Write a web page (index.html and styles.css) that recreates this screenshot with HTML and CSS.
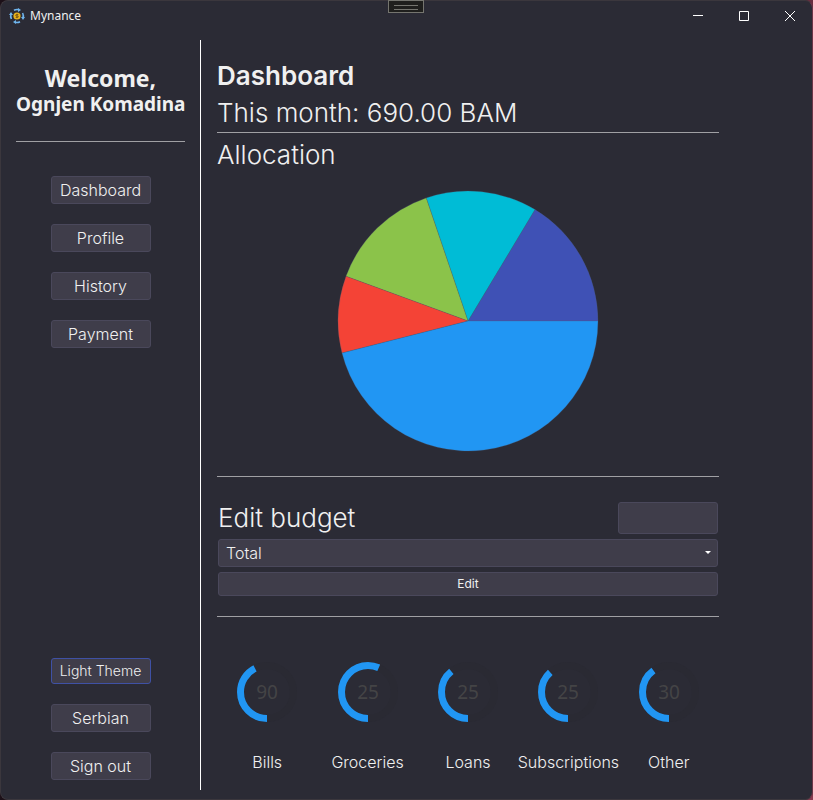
FILE: index.html
```html
<!DOCTYPE html>
<html lang="en">
<head>
<meta charset="utf-8">
<meta name="viewport" content="width=device-width, initial-scale=1">
<title>Mynance</title>
<link rel="stylesheet" href="styles.css">
</head>
<body>
<div class="window">
  <header class="titlebar">
    <svg class="app-icon" viewBox="0 0 16 16" aria-hidden="true">
      <g fill="none" stroke="#6fb5ee" stroke-width="1.6">
        <path d="M5 2.2A6.6 6.6 0 0 1 9.5 1.6"/>
        <path d="M13.6 5A6.6 6.6 0 0 1 14 10"/>
        <path d="M11 13.8A6.6 6.6 0 0 1 6.5 14.4"/>
        <path d="M2.4 11A6.6 6.6 0 0 1 2 6"/>
      </g>
      <path fill="#6fb5ee" d="M9 0l3 2-3 2zM16 9l-2 3-2-3zM7 16l-3-2 3-2zM0 7l2-3 2 3z"/>
      <circle cx="8" cy="8" r="3.6" fill="#e9b21d"/>
      <path d="M9.3 6.6H7.4c-1 0-1 1.4 0 1.4h1.2c1 0 1 1.4 0 1.4H6.7M8 5.8v4.4" fill="none" stroke="#6b4d12" stroke-width=".8"/>
    </svg>
    <span class="app-name">Mynance</span>
    <button class="caption" aria-label="Minimize"><svg viewBox="0 0 10 10"><path d="M0 4.5h10"/></svg></button>
    <button class="caption" aria-label="Maximize"><svg viewBox="0 0 10 10"><path d="M.5.5h9v9h-9z"/></svg></button>
    <button class="caption" aria-label="Close"><svg viewBox="0 0 10 10"><path d="M0 0l10 10M10 0L0 10"/></svg></button>
    <div class="grip"></div>
  </header>

  <div class="layout">
    <aside class="sidebar">
      <div class="greeting">
        <p class="welcome">Welcome,</p>
        <p class="user">Ognjen Komadina</p>
      </div>
      <nav class="menu">
        <button class="button">Dashboard</button>
        <button class="button">Profile</button>
        <button class="button">History</button>
        <button class="button">Payment</button>
      </nav>
      <div class="menu menu-bottom">
        <button class="button focused">Light Theme</button>
        <button class="button">Serbian</button>
        <button class="button">Sign out</button>
      </div>
    </aside>

    <main class="content">
      <section class="summary">
        <h1>Dashboard</h1>
        <p class="headline">This month: 690.00 BAM</p>
      </section>

      <section class="allocation">
        <h2 class="headline">Allocation</h2>
        <svg class="pie" viewBox="-1 -1 262 262" role="img" aria-label="Allocation by category">
          <path fill="#3f51b5" d="M130 130L260 130A130 130 0 0 0 197 18.6z"/>
          <path fill="#00bcd6" d="M130 130L197 18.6A130 130 0 0 0 88.2 6.9z"/>
          <path fill="#8bc34a" d="M130 130L88.2 6.9A130 130 0 0 0 8 85.3z"/>
          <path fill="#f44336" d="M130 130L8 85.3A130 130 0 0 0 4 162z"/>
          <path fill="#2196f3" d="M130 130L4 162A130 130 0 0 0 260 130z"/>
        </svg>
      </section>

      <form class="budget">
        <div class="budget-head">
          <label class="headline" for="amount">Edit budget</label>
          <input class="field amount" id="amount" type="text">
        </div>
        <div class="picker">
          <select class="field" aria-label="Budget category"><option>Total</option></select>
          <svg class="arrow" viewBox="0 0 6 3" aria-hidden="true"><path d="M0 0h6L3 3z"/></svg>
        </div>
        <button class="field submit" type="button">Edit</button>
      </form>

      <section class="gauges">
        <figure class="gauge">
          <svg viewBox="0 0 60 60"><circle class="track" cx="30" cy="30" r="26.5"/><circle class="value" cx="30" cy="30" r="26.5" pathLength="360" stroke-dasharray="153 360"/><text x="30" y="37">90</text></svg>
          <figcaption>Bills</figcaption>
        </figure>
        <figure class="gauge">
          <svg viewBox="0 0 60 60"><circle class="track" cx="30" cy="30" r="26.5"/><circle class="value" cx="30" cy="30" r="26.5" pathLength="360" stroke-dasharray="204 360"/><text x="30" y="37">25</text></svg>
          <figcaption>Groceries</figcaption>
        </figure>
        <figure class="gauge">
          <svg viewBox="0 0 60 60"><circle class="track" cx="30" cy="30" r="26.5"/><circle class="value" cx="30" cy="30" r="26.5" pathLength="360" stroke-dasharray="141 360"/><text x="30" y="37">25</text></svg>
          <figcaption>Loans</figcaption>
        </figure>
        <figure class="gauge">
          <svg viewBox="0 0 60 60"><circle class="track" cx="30" cy="30" r="26.5"/><circle class="value" cx="30" cy="30" r="26.5" pathLength="360" stroke-dasharray="138 360"/><text x="30" y="37">25</text></svg>
          <figcaption>Subscriptions</figcaption>
        </figure>
        <figure class="gauge">
          <svg viewBox="0 0 60 60"><circle class="track" cx="30" cy="30" r="26.5"/><circle class="value" cx="30" cy="30" r="26.5" pathLength="360" stroke-dasharray="144 360"/><text x="30" y="37">30</text></svg>
          <figcaption>Other</figcaption>
        </figure>
      </section>
    </main>
  </div>
</div>
</body>
</html>
```
FILE: styles.css
```css
* { box-sizing: border-box; }

body {
  margin: 0;
  background: linear-gradient(100deg, #1c1018 50%, #8a3a50);
  color: #f0f0f0;
  font: 350 16px/20px Inter, "Liberation Sans", sans-serif;
}

h1, h2, p, figure { margin: 0; }

button, input, select {
  font: inherit;
  color: inherit;
}

.window {
  display: flex;
  flex-direction: column;
  min-height: 100vh;
  border: 1px solid #3b373d;
  border-right-color: #6b3648;
  border-radius: 8px;
  background: #2b2b35;
}

/* Title bar */
.titlebar {
  position: relative;
  display: flex;
  align-items: center;
  height: 30px;
  margin-right: -1px;
  padding-left: 8px;
  font-family: "Noto Sans", sans-serif;
  font-weight: 400;
  font-size: 12px;
}

.app-icon {
  width: 16px;
  height: 16px;
}

.app-name {
  flex: 1;
  padding-left: 5px;
}

.caption {
  display: grid;
  place-items: center;
  width: 46px;
  height: 30px;
  padding: 0;
  border: 0;
  background: none;
}

.caption svg {
  width: 10px;
  height: 10px;
  fill: none;
  stroke: #fff;
}

.grip {
  position: absolute;
  top: -1px;
  left: calc(50% - 19px);
  width: 36px;
  height: 13px;
  padding: 4px 5px;
  border: 1px solid #75756f;
  background: #1f1f1d;
}

.grip::before {
  content: "";
  display: block;
  height: 3px;
  border: solid #75756f;
  border-width: 1px 0;
}

/* Page frame */
.layout {
  display: flex;
  flex: 1;
  padding: 9px 0;
}

.sidebar {
  display: flex;
  flex-direction: column;
  width: 200px;
  padding: 24px 15px 10px;
  border-right: 1px solid #fff;
}

.greeting {
  padding-bottom: 25px;
  border-bottom: 1px solid #a0a0a4;
  font-family: "Noto Sans", sans-serif;
  font-weight: 700;
  text-align: center;
  white-space: nowrap;
}

.welcome {
  font-size: 23px;
  line-height: 28px;
}

.user {
  font-size: 19px;
  line-height: 24px;
}

.menu {
  display: flex;
  flex-direction: column;
  align-items: center;
  gap: 20px;
  padding-top: 34px;
}

.menu-bottom {
  margin-top: auto;
  padding-top: 20px;
}

.button,
.field {
  border: 1px solid #4a485b;
  border-radius: 3px;
  background: #3f3d4a;
}

.button {
  width: 100px;
  height: 28px;
  padding: 0;
  white-space: nowrap;
}

.focused {
  height: 26px;
  border-color: #3f51a5;
  font-size: 14px;
}

/* Main column */
.content {
  flex: 1;
  min-width: 0;
  padding: 20px 93px 0 16px;
}

h1 {
  font-size: 26px;
  line-height: 32px;
  font-weight: 600;
}

.headline {
  font-size: 26px;
  line-height: 32px;
  font-weight: 300;
}

.summary,
.allocation,
.budget {
  border-bottom: 1px solid #a0a0a4;
}

.summary .headline {
  padding-top: 5px;
  padding-bottom: 3px;
}

.allocation {
  padding: 6px 0 24px;
}

.pie {
  display: block;
  width: 262px;
  height: 262px;
  margin: 19px auto 0;
}

.pie path {
  stroke: #50607a;
  stroke-opacity: .25;
}

.budget {
  display: grid;
  gap: 5px;
  padding: 25px 1px 20px;
}

.budget-head {
  display: flex;
  align-items: flex-end;
  justify-content: space-between;
}

.amount {
  width: 100px;
  height: 32px;
}

.picker {
  position: relative;
}

.picker select {
  display: block;
  width: 100%;
  height: 28px;
  padding: 0 7px;
  appearance: none;
}

.arrow {
  position: absolute;
  top: 12px;
  right: 7px;
  width: 6px;
  height: 3px;
  fill: #fff;
}

.submit {
  height: 24px;
  font-size: 12px;
  font-weight: 400;
  line-height: 20px;
}

/* Category gauges */
.gauges {
  display: grid;
  grid-template-columns: repeat(5, minmax(0, 1fr));
  padding-top: 45px;
}

.gauge {
  display: flex;
  flex-direction: column;
  align-items: center;
  gap: 30px;
  white-space: nowrap;
}

.gauge svg {
  width: 60px;
  height: 60px;
}

.gauge circle {
  fill: none;
  stroke-width: 7;
  transform: rotate(90deg);
  transform-origin: center;
}

.track { stroke: #2a2a33; }
.value { stroke: #2196f3; }

.gauge text {
  fill: #444446;
  font: 400 19px "Noto Sans", sans-serif;
  text-anchor: middle;
}
```
